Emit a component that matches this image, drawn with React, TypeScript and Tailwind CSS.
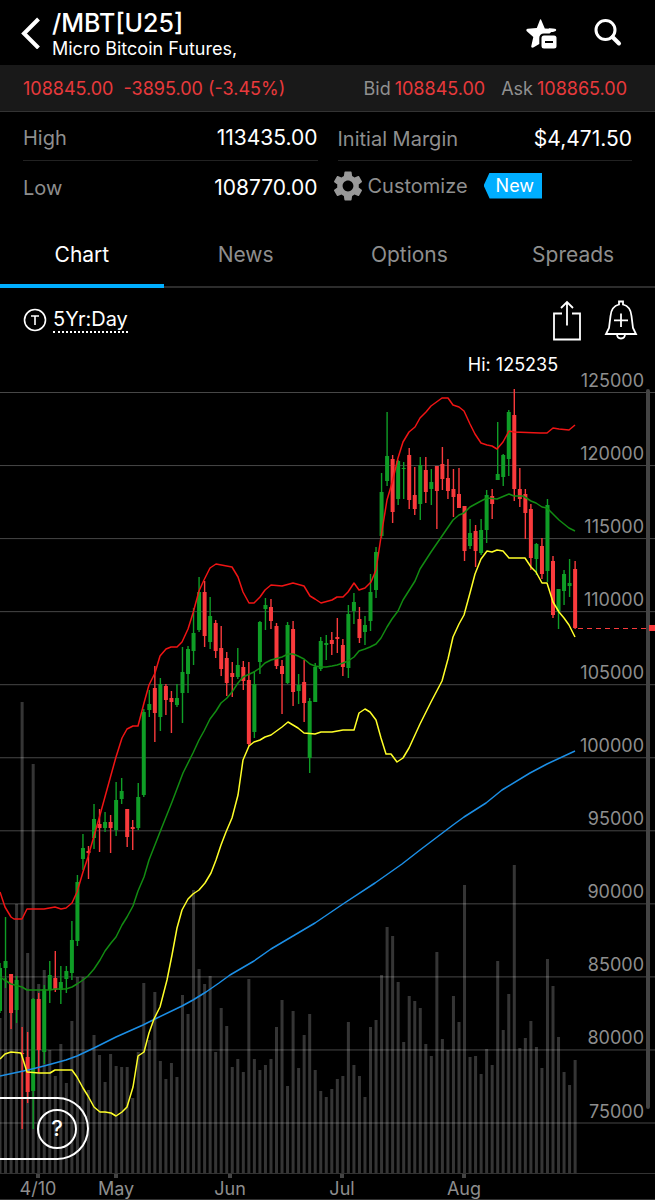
import React, { useState } from 'react';
import { MdSettings } from 'react-icons/md';

type Candle = [high: number, top: number, bottom: number, low: number, up: 0 | 1];

// Vertical positions on the chart canvas, one entry per trading day
const candles: Candle[] = [
  [963, 968, 1011, 1013, 1], [917, 961, 968, 988, 1], [974, 974, 1013, 1029, 0], [976, 980, 1010, 1023, 1],
  [1027, 1053, 1054, 1129, 0], [1032, 1057, 1092, 1103, 0], [998, 999, 1091, 1129, 1], [993, 999, 1050, 1073, 0],
  [985, 989, 1052, 1064, 1], [961, 975, 990, 1003, 1], [951, 978, 990, 992, 0], [966, 982, 990, 1004, 1],
  [966, 971, 979, 993, 1], [921, 940, 973, 980, 1], [875, 882, 941, 946, 1], [834, 848, 859, 870, 1],
  [846, 851, 853, 879, 0], [804, 819, 838, 849, 1], [809, 824, 828, 852, 0], [812, 822, 828, 832, 1],
  [815, 822, 828, 853, 0], [782, 800, 830, 836, 1], [778, 791, 799, 804, 1], [809, 809, 837, 847, 0],
  [820, 827, 829, 850, 0], [783, 797, 828, 830, 1], [709, 712, 795, 797, 1], [690, 704, 710, 717, 1],
  [666, 688, 713, 742, 0], [678, 684, 717, 731, 1], [684, 686, 700, 715, 0], [691, 698, 702, 733, 0],
  [684, 698, 705, 707, 1], [647, 672, 693, 723, 1], [646, 649, 674, 693, 1], [608, 633, 651, 665, 1],
  [577, 592, 630, 632, 1], [581, 592, 636, 647, 0], [597, 616, 642, 649, 1], [620, 623, 651, 658, 0],
  [626, 648, 669, 676, 0], [652, 658, 683, 696, 0], [662, 673, 677, 697, 0], [648, 665, 677, 679, 1],
  [661, 667, 681, 690, 0], [662, 680, 744, 746, 0], [671, 684, 732, 738, 1], [621, 622, 662, 674, 1],
  [598, 605, 609, 630, 1], [599, 607, 621, 629, 0], [623, 626, 666, 669, 0], [660, 666, 674, 714, 0],
  [622, 625, 683, 684, 1], [621, 629, 692, 706, 0], [674, 685, 691, 704, 1], [660, 682, 703, 722, 0],
  [698, 701, 758, 773, 1], [663, 667, 702, 702, 1], [637, 641, 669, 671, 1], [635, 643, 645, 660, 1],
  [632, 640, 644, 655, 0], [618, 637, 639, 653, 0], [639, 645, 667, 676, 0], [605, 614, 668, 678, 1],
  [593, 602, 611, 624, 1], [607, 619, 638, 643, 0], [616, 625, 632, 645, 1], [574, 592, 621, 631, 1],
  [547, 552, 590, 598, 1], [473, 492, 536, 538, 1], [412, 456, 481, 486, 1], [455, 459, 512, 523, 0],
  [460, 461, 499, 505, 1], [462, 468, 469, 499, 1], [448, 455, 500, 509, 0], [467, 495, 509, 515, 0],
  [457, 465, 504, 520, 1], [457, 470, 492, 503, 0], [469, 482, 489, 505, 1], [466, 466, 491, 529, 0],
  [447, 464, 479, 490, 0], [459, 478, 491, 499, 0], [469, 489, 497, 517, 0], [468, 494, 508, 508, 0],
  [506, 506, 551, 561, 0], [519, 533, 546, 549, 1], [525, 531, 551, 567, 0], [519, 530, 553, 555, 1],
  [490, 495, 530, 543, 1], [489, 496, 504, 519, 0], [422, 474, 480, 480, 1], [454, 455, 477, 486, 1],
  [410, 412, 459, 476, 1], [389, 415, 489, 501, 0], [468, 489, 499, 507, 0], [489, 494, 513, 539, 0],
  [504, 509, 558, 570, 0], [543, 544, 559, 575, 1], [538, 546, 574, 579, 0], [499, 505, 571, 582, 1],
  [556, 561, 615, 618, 0], [589, 589, 611, 629, 1], [570, 574, 591, 605, 1], [559, 583, 586, 597, 1],
  [561, 569, 628, 629, 0],
];

const volumes = [
  1018, 978, 1000, 904, 702, 953, 764, 984, 970, 1050, 1076, 1044, 1083, 1021, 977, 977, 1090, 1035, 1055, 1082, 1054,
  1066, 1067, 1067, 1098, 1052, 983, 1040, 992, 1061, 1079, 1063, 1077, 995, 1014, 890, 969, 984, 976, 1052, 1008, 1026,
  1067, 1059, 1072, 979, 1059, 1070, 1065, 1059, 1027, 1000, 1086, 1011, 1068, 1035, 1014, 1070, 1091, 1097, 1089, 1079,
  1076, 1022, 1065, 1076, 1097, 1027, 1020, 975, 927, 936, 982, 1042, 996, 1001, 1008, 1044, 1056, 952, 1039, 1050, 996,
  1022, 885, 1057, 1056, 1074, 1049, 1065, 961, 1030, 994, 865, 1048, 1038, 1021, 1047, 1068, 959, 986, 1037, 1072, 1085,
  1060,
];

const upperBand =
  '0,892 5,907 11,917 14,919 22,919 27,909 44,909 55,907 61,909 66,908 72,903 77,892 83,872 88,857 100,815 111,775 116,757 122,738 127,729 133,726 138,726 144,703 149,685 155,673 160,656 166,649 171,647 177,647 182,642 188,629 193,613 199,591 204,580 210,568 216,564 232,567 238,577 243,592 249,603 254,603 260,597 265,590 271,585 282,586 293,583 304,586 310,596 315,599 321,603 332,600 337,597 343,597 348,592 354,583 359,590 365,588 371,582 376,570 381,537 387,500 392,483 398,458 403,442 409,432 415,427 420,418 426,412 431,406 442,398 448,398 453,405 459,407 464,411 470,424 475,434 481,443 487,445 492,446 497,449 503,442 509,431 514,432 540,433 547,433 553,428 559,429 569,430 575,425';
const average =
  '0,977 3,979 11,984 22,987 27,990 50,990 55,989 66,989 72,987 77,984 83,980 88,976 94,969 100,960 105,951 111,943 116,937 122,925 127,917 133,906 138,891 144,877 149,860 160,832 172,802 183,773 193,753 199,740 204,731 210,719 216,711 221,703 227,698 232,692 238,683 243,677 254,672 260,668 265,663 271,660 282,657 288,654 293,654 298,656 304,659 310,664 315,666 321,667 326,667 332,666 337,665 343,663 348,661 354,657 359,651 365,649 370,647 376,644 381,638 387,627 392,619 398,611 403,600 415,581 420,569 431,552 442,536 453,520 459,515 464,513 470,507 481,501 487,498 497,499 509,494 514,496 523,496 531,501 536,503 542,507 547,508 553,514 559,520 569,528 575,531';
const lowerBand =
  '0,1059 5,1054 11,1052 21,1053 27,1072 39,1073 50,1073 55,1070 72,1070 77,1077 83,1088 88,1096 94,1107 100,1112 105,1112 111,1113 116,1116 122,1112 127,1107 133,1087 138,1056 144,1052 149,1033 154,1019 160,1007 167,980 172,955 177,928 182,910 188,899 193,894 199,890 205,883 211,873 216,860 221,845 226,832 232,818 238,795 243,760 249,746 254,742 260,740 265,737 271,735 282,727 288,722 293,725 298,728 304,733 315,734 321,732 332,732 343,730 354,730 359,713 365,709 370,712 376,720 381,738 386,754 391,754 397,762 403,758 409,748 420,724 431,702 442,681 448,659 453,637 459,624 464,615 470,593 475,574 481,559 487,551 492,552 497,550 503,551 509,558 525,558 531,567 536,572 542,583 547,583 553,602 559,612 564,618 569,625 575,637';
const longAverage =
  '0,1076 28,1070 44,1066 66,1060 77,1056 94,1048 116,1037 143,1025 155,1019 182,1006 193,1000 206,992 219,983 230,975 254,961 271,949 293,936 315,923 343,904 375,883 402,864 420,850 453,825 464,817 486,803 502,790 530,773 547,764 575,751';

const prices = [125000, 120000, 115000, 110000, 105000, 100000, 95000, 90000, 85000, 80000, 75000];
const months = [
  { label: '4/10', x: 38 },
  { label: 'May', x: 116 },
  { label: 'Jun', x: 230 },
  { label: 'Jul', x: 342 },
  { label: 'Aug', x: 464 },
];
const tabs = ['Chart', 'News', 'Options', 'Spreads'];

const dayX = (i: number) => i * 5.53;
const priceY = (price: number) => 392 + ((125000 - price) / 5000) * 73.05;

const Header = () => (
  <header className="flex h-[65px] items-center pl-5 pr-8">
    <button type="button" aria-label="Back" className="w-8 shrink-0">
      <svg viewBox="0 0 20 32" className="h-8 w-5" fill="none" stroke="#fff" strokeWidth="4">
        <path d="M18.500 2L4 16.500L18.500 31" />
      </svg>
    </button>
    <div className="grow pt-1">
      <h1 className="text-[25px] font-medium leading-7">/MBT[U25]</h1>
      <p className="text-[18px] leading-6">Micro Bitcoin Futures,</p>
    </div>
    <div className="flex items-center gap-9">
      <button type="button" aria-label="Remove from watchlist">
        <svg viewBox="0 0 32 32" className="h-8 w-8">
          <path
            d="M16 2.500L19.800 11.500L30 12L24.500 16.500H19C16 16.500 14.300 18.500 14.300 21V27L8.300 30.500C7 31 6 30.300 6.300 29L8.300 20L1.800 14.200C0.900 13.200 1.300 12 2.800 11.800L11.800 11L15 2.800C15.300 2 15.700 2 16 2.500Z"
            fill="#fff"
          />
          <path d="M28 15L30.700 14C31.700 13 31.200 11.900 29.800 11.800L24 11.300L22 15Z" fill="#fff" />
          <rect x="16.500" y="18.500" width="15" height="13" rx="2.500" fill="#fff" />
          <rect x="20" y="24" width="8" height="2" fill="#000" />
        </svg>
      </button>
      <button type="button" aria-label="Search">
        <svg viewBox="0 0 30 30" className="h-[30px] w-[30px]" fill="none" stroke="#fff">
          <circle cx="12.500" cy="12" r="9.500" strokeWidth="3" />
          <path d="M19.500 19L26 25.500" strokeWidth="4" strokeLinecap="round" />
        </svg>
      </button>
    </div>
  </header>
);

const QuoteBar = () => (
  <div className="flex h-[47px] items-center justify-between border-b border-[#333] bg-[#191919] pl-[23px] pr-7 text-[18px] text-[#e8393c]">
    <p className="flex gap-2.5">
      <span>108845.00</span>
      <span>-3895.00 (-3.45%)</span>
    </p>
    <p className="flex gap-4">
      <span className="flex gap-1">
        <span className="text-[#909090]">Bid</span> 108845.00
      </span>
      <span className="flex gap-1">
        <span className="text-[#909090]">Ask</span> 108865.00
      </span>
    </p>
  </div>
);

const Detail = ({ label, value }: { label: string; value: string }) => (
  <div className="flex h-[49px] items-center justify-between pt-1">
    <dt className="text-[#8e8e8e]">{label}</dt>
    <dd className="text-[21px]">{value}</dd>
  </div>
);

const Details = () => (
  <div className="grid grid-cols-2 gap-5 pl-[23px] pr-[23px] text-[20px]">
    <dl className="divide-y divide-[#222]">
      <Detail label="High" value="113435.00" />
      <Detail label="Low" value="108770.00" />
    </dl>
    <div className="divide-y divide-[#222]">
      <dl className="h-[49px]">
        <Detail label="Initial Margin" value="$4,471.50" />
      </dl>
      <button type="button" className="-ml-2 flex h-[49px] items-center text-[#8e8e8e]">
        <MdSettings className="h-9 w-9" color="#999" />
        <span className="ml-0.5">Customize</span>
        <span className="ml-4 bg-[#00aeff] pl-3 pr-2 text-[18px] leading-[26px] text-white [clip-path:polygon(6px_0,100%_0,100%_100%,6px_100%,0_50%)]">
          New
        </span>
      </button>
    </div>
  </div>
);

const ChartToolbar = () => (
  <div className="flex h-16 items-center justify-between pl-[23px] pr-4">
    <button type="button" className="flex items-center gap-1.5">
      <svg viewBox="0 0 24 24" className="h-6 w-6" fill="none" stroke="#fff" strokeWidth="1.600">
        <circle cx="12" cy="12" r="10.500" />
        <path d="M8 8H16M12 8V17" />
      </svg>
      <span className="border-b-2 border-dotted border-white text-[20px] leading-6">5Yr:Day</span>
    </button>
    <div className="flex items-center gap-5">
      <button type="button" aria-label="Share">
        <svg viewBox="0 0 32 42" className="h-[42px] w-8" fill="none" stroke="#fff" strokeWidth="1.800">
          <path d="M11 14.500H3V40.500H29V14.500H21M16 26.500V3M10 9L16 3L22 9" />
        </svg>
      </button>
      <button type="button" aria-label="Add alert">
        <svg viewBox="0 0 36 42" className="h-[42px] w-9" fill="none" stroke="#fff" strokeWidth="1.800">
          <path d="M16 5.500V2.500H20V5.500C26 7 28 11 28.500 17L30 29L33 35H3L6 29L7.500 17C8 11 10 7 16 5.500Z" />
          <path d="M14 35C14 41 22 41 22 35M18 14.500V28M11 21.300H25" />
        </svg>
      </button>
    </div>
  </div>
);

const PriceChart = () => (
  <svg viewBox="0 352 655 848" className="block w-full" role="img" aria-label="Daily price chart">
    <g fill="#353535">
      {volumes.map((y, i) => (
        <rect key={i} x={dayX(i) - 1.5} y={y} width="3" height={1173 - y} />
      ))}
    </g>
    <g stroke="#fff" strokeOpacity="0.28">
      {prices.map((price) => (
        <line key={price} x1="0" x2="655" y1={priceY(price) + 0.5} y2={priceY(price) + 0.5} />
      ))}
    </g>
    <path d="M0 1173.500H655M0 1199.500H655" stroke="#333" />
    <rect x="646" y="389" width="4" height="720" rx="2" fill="#444" />

    {candles.map(([high, top, bottom, low, up], i) => (
      <g key={i} fill={up ? '#0f9d26' : '#f93a3c'}>
        <rect x={dayX(i) - 0.7} y={high} width="1.400" height={low - high} />
        <rect x={dayX(i) - 2} y={top} width="4" height={Math.max(bottom - top, 1)} />
      </g>
    ))}

    <g fill="none" strokeLinejoin="round" strokeWidth="1.500">
      <polyline points={longAverage} stroke="#1c8fe6" />
      <polyline points={average} stroke="#128c12" />
      <polyline points={lowerBand} stroke="#ffff28" />
      <polyline points={upperBand} stroke="#f01414" />
    </g>

    <line x1="578" x2="649" y1="628.500" y2="628.500" stroke="#f93a3c" strokeDasharray="5 4" />
    <rect x="649" y="625" width="6" height="6" fill="#f93a3c" />

    <g fill="#8e8e8e" fontSize="18">
      {prices.map((price) => (
        <text key={price} x="644" y={priceY(price) - 5} textAnchor="end">
          {price}
        </text>
      ))}
      {months.map(({ label, x }) => (
        <g key={label}>
          <rect x={x - 2} y="1174" width="4" height="4" fill="#444" />
          <text x={x} y="1195" textAnchor="middle">
            {label}
          </text>
        </g>
      ))}
    </g>
    <text x="513" y="371" textAnchor="middle" fontSize="18" fill="#fff">
      Hi: 125235
    </text>
  </svg>
);

export default function App() {
  const [active, setActive] = useState('Chart');

  return (
    <main className="min-h-screen bg-black font-[Inter,'Liberation_Sans',sans-serif] text-white">
      <Header />
      <QuoteBar />
      <Details />
      <nav role="tablist" className="grid h-[78px] grid-cols-4 border-b-2 border-[#2c2c2c]">
        {tabs.map((tab) => (
          <button
            key={tab}
            type="button"
            role="tab"
            aria-selected={tab === active}
            onClick={() => setActive(tab)}
            className={`-mb-0.5 border-b-4 pt-4 text-[21px] ${
              tab === active ? 'border-[#00aeff] text-white' : 'border-transparent text-[#8e8e8e]'
            }`}
          >
            {tab}
          </button>
        ))}
      </nav>
      <ChartToolbar />
      <div className="relative">
        <PriceChart />
        {/* Help tab sticks out from the left edge of the chart */}
        <div className="absolute bottom-10 left-0 flex h-[63px] w-[89px] items-center justify-end rounded-r-full border-2 border-l-0 border-white pr-2.5">
          <button type="button" aria-label="Help" className="h-10 w-10 rounded-full border-2 border-white text-[22px] font-medium">
            ?
          </button>
        </div>
      </div>
    </main>
  );
}
